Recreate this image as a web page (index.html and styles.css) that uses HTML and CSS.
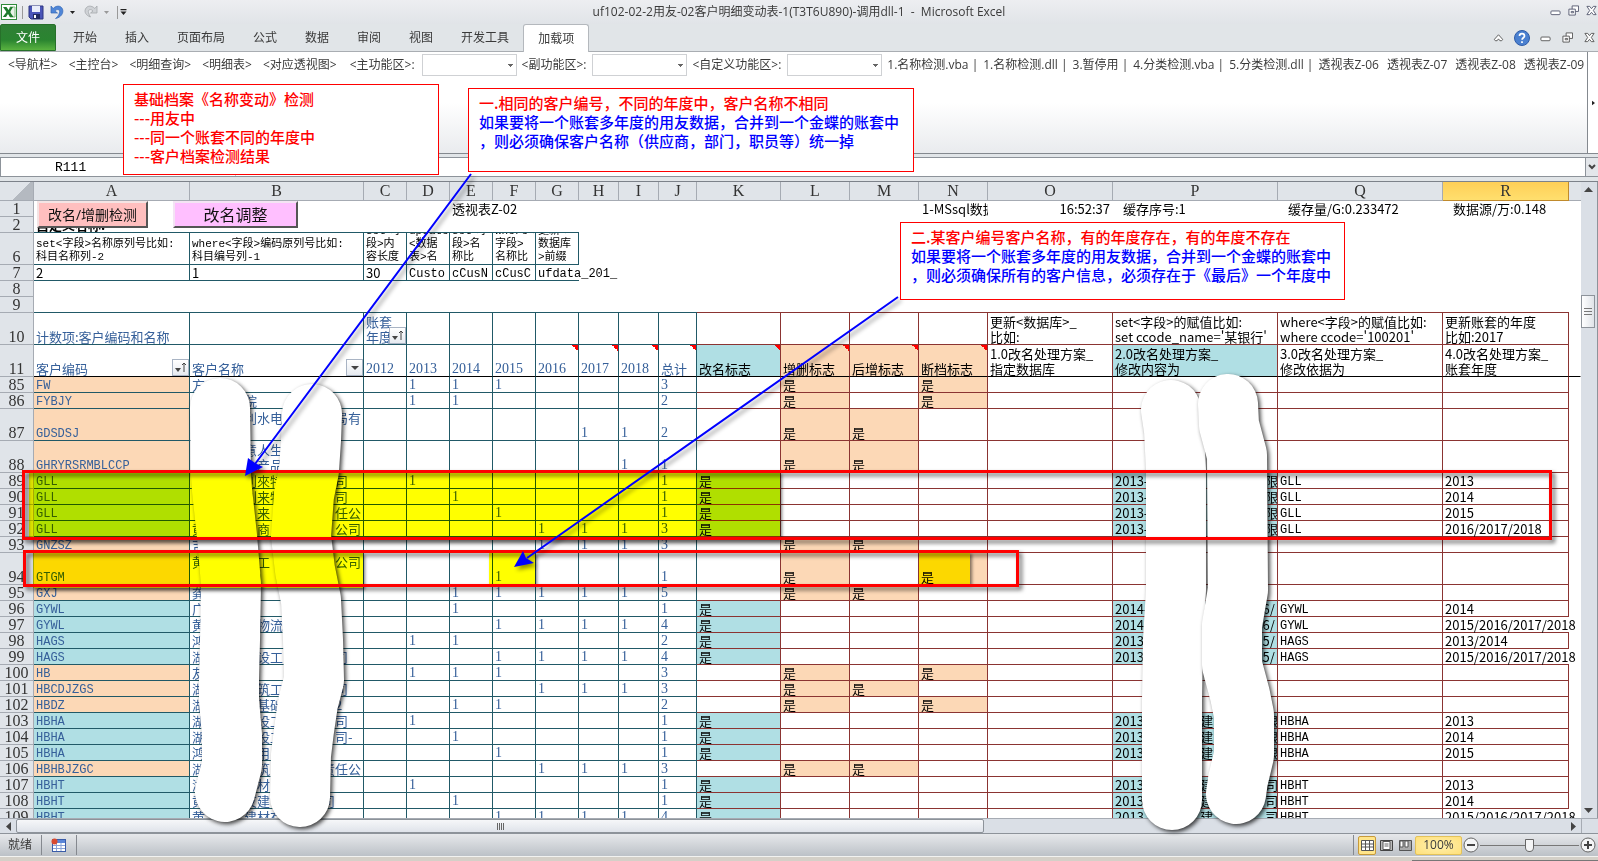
FILE: index.html
```html
<!DOCTYPE html>
<html lang="zh-CN">
<head>
<meta charset="utf-8">
<title>uf102-02-2用友-02客户明细变动表-1(T3T6U890)-调用dll-1 - Microsoft Excel</title>
<link rel="stylesheet" href="styles.css">
</head>
<body>
<header class="titlebar">
  <div class="quick">
    <svg class="ico16" viewBox="0 0 16 16"><rect x=".5" y=".5" width="15" height="15" fill="#fff" stroke="#2f8a3a"/><path d="M9 3h5v10H9z" fill="#e8f3e8" stroke="#7fba7f"/><path d="M2 3h3.500L7.500 6l2-3H12L9 8l3.500 5H9L7 10l-2 3H1.800L5.500 8z" fill="#1e7b2d"/></svg>
    <i class="vsep"></i>
    <svg class="ico16" viewBox="0 0 16 16"><path d="M1 2h14v13H3l-2-2z" fill="#4a55b8" stroke="#2c3580"/><path d="M4 2h8v6H4z" fill="#e9edfa"/><path d="M5 10h7v5H5z" fill="#20285f"/><path d="M6 11h2v3H6z" fill="#fff"/></svg>
    <svg class="ico16" viewBox="0 0 16 16"><path d="M2 2v7h6.500L6 7c2-2.500 5.500-1.500 4.500 1.500C10 11 8.500 13 6.500 14.500c5.500-1 8.500-5.500 7-9.500C12 1.500 7.500 1 4.200 4.500z" fill="#4f86d8" stroke="#3568b5" stroke-width=".7"/></svg>
    <svg class="caret" viewBox="0 0 7 4"><path d="M0 0h7L3.500 4z" fill="#222"/></svg>
    <svg class="ico16" viewBox="0 0 16 16"><path d="M14 2v7H7.500L10 7C8 4.500 4.500 5.500 5.500 8.500c.3 1.500 1 3 2 4.500C3 11.500 1 8 2.500 5 4 1.500 8.500 1 11.800 4.500z" fill="#cfd2d6" stroke="#a5a8ac" stroke-width=".8"/></svg>
    <svg class="caret" viewBox="0 0 7 4"><path d="M0 0h7L3.500 4z" fill="#999"/></svg>
    <i class="vsep"></i>
    <svg class="caret tall" viewBox="0 0 7 7"><path d="M0 0h7v1.500H0zM0 3h7L3.500 7z" fill="#222"/></svg>
  </div>
  <h1>uf102-02-2用友-02客户明细变动表-1(T3T6U890)-调用dll-1 &nbsp;-&nbsp; Microsoft Excel</h1>
  <div class="winbtns">
    <svg viewBox="0 0 12 12"><rect x="1" y="6.500" width="10" height="4" rx="1" fill="#fff" stroke="#555a70"/></svg>
    <svg viewBox="0 0 12 12"><path d="M4.500 1h7v6h-7z" fill="#fff" stroke="#555a70"/><path d="M1 4.500h7V11H1z" fill="#fff" stroke="#555a70"/><path d="M3.500 7h2.500v1.500H3.500z" fill="none" stroke="#555a70"/></svg>
    <svg viewBox="0 0 12 12"><path d="M1 1.500h3L6 4l2-2.500h3L8 6l3 4.500H8L6 8l-2 2.500H1L4 6z" fill="#fff" stroke="#555a70"/></svg>
  </div>
</header>
<nav class="tabs">
  <button class="file">文件</button>
  <button>开始</button><button>插入</button><button>页面布局</button><button>公式</button><button>数据</button><button>审阅</button><button>视图</button><button>开发工具</button><button class="active">加载项</button>
  <div class="tabtools">
    <svg viewBox="0 0 12 12"><path d="M1.500 8L6 3l4.500 5-1 1.500H7.500L6 7.500 4.500 9.500h-2z" fill="#fff" stroke="#555"/></svg>
    <svg class="help" viewBox="0 0 16 16"><circle cx="8" cy="8" r="7.500" fill="#4a80d0" stroke="#2e5ca8"/><path d="M5.500 6c0-3.200 5-3.200 5 0 0 1.800-2.400 1.800-2.400 3.800M8 11.200v1.800" fill="none" stroke="#fff" stroke-width="1.700"/></svg>
    <svg viewBox="0 0 12 12"><rect x="1" y="5.500" width="10" height="4" rx="1" fill="#fff" stroke="#555"/></svg>
    <svg viewBox="0 0 12 12"><path d="M4.500 1h7v6h-7z" fill="#fff" stroke="#555"/><path d="M1 4.500h7V11H1z" fill="#fff" stroke="#555"/><path d="M3.500 7h2.500v1.500H3.500z" fill="none" stroke="#555"/></svg>
    <svg viewBox="0 0 12 12"><path d="M1 1.500h3L6 4l2-2.500h3L8 6l3 4.500H8L6 8l-2 2.500H1L4 6z" fill="#fff" stroke="#555"/></svg>
  </div>
</nav>
<section class="ribbon">
  <div class="addins">
    <div class="group wide">
      <button>&lt;导航栏&gt;</button><button>&lt;主控台&gt;</button><button>&lt;明细查询&gt;</button><button>&lt;明细表&gt;</button><button>&lt;对应透视图&gt;</button>
      <label>&lt;主功能区&gt;:<select><option></option></select></label>
    </div>
    <label>&lt;副功能区&gt;:<select><option></option></select></label>
    <label>&lt;自定义功能区&gt;:<select><option></option></select></label>
    <button>1.名称检测.vba |</button><button>1.名称检测.dll |</button><button>3.暂停用 |</button><button>4.分类检测.vba |</button><button>5.分类检测.dll |</button>
    <div class="group views"><button>透视表Z-06</button><button>透视表Z-07</button><button>透视表Z-08</button><button>透视表Z-09</button></div>
  </div>
  <button class="more" aria-label="更多"><svg viewBox="0 0 4 6"><path d="M0 0l4 3-4 3z" fill="#222"/></svg></button>
</section>
<section class="formula">
  <input class="namebox" aria-label="名称框" value="R111">
  <input class="fx" aria-label="编辑栏">
  <button class="expand" aria-label="展开"><svg viewBox="0 0 8 6"><path d="M1 1l3 3 3-3" fill="none" stroke="#444" stroke-width="2"/></svg></button>
</section>
<main class="sheet">
  <div class="view">
    <table>
      <thead>
        <tr class="cols"><th class="corner"></th><th>A</th><th>B</th><th>C</th><th>D</th><th>E</th><th>F</th><th>G</th><th>H</th><th>I</th><th>J</th><th>K</th><th>L</th><th>M</th><th>N</th><th>O</th><th>P</th><th>Q</th><th class="sel">R</th><th class="rest"></th></tr>
      </thead>
      <tbody class="top">
        <tr><th>1</th><td></td><td></td><td></td><td></td><td>透视表Z-02</td><td></td><td></td><td></td><td></td><td></td><td></td><td></td><td></td><td class="near clip">1-MSsql数据库</td><td class="right">16:52:37</td><td class="indent">缓存序号:1</td><td class="indent">缓存量/G:0.233472</td><td class="indent">数据源/万:0.148</td></tr>
        <tr class="ruled"><th>2</th><td class="bold">自定义名称:</td><td></td><td></td><td></td><td></td><td></td><td></td></tr>
        <tr class="x2 small boxed"><th>6</th><td>set&lt;字段&gt;名称原列号比如:
科目名称列-2</td><td>where&lt;字段&gt;编码原列号比如:
科目编号列-1</td><td class="clip">set&lt;字
段&gt;内
容长度</td><td class="clip">update
&lt;数据
表&gt;名</td><td class="clip">set&lt;字
段&gt;名
称比</td><td class="clip">where&lt;
字段&gt;
名称比</td><td class="clip">更新&lt;
数据库
&gt;前缀</td></tr>
        <tr class="boxed"><th>7</th><td>2</td><td>1</td><td>30</td><td class="mono">Custo</td><td class="mono">cCusN</td><td class="mono">cCusC</td><td class="mono open">ufdata_201_</td></tr>
        <tr><th>8</th></tr>
        <tr class="lined"><th>9</th><td></td><td></td><td></td><td></td><td></td><td></td><td></td><td></td><td></td><td></td><td></td><td></td><td></td><td></td><td></td><td></td><td></td><td></td></tr>
      </tbody>
      <tbody class="pivot">
        <tr class="x2"><th>10</th><td>计数项:客户编码和名称</td><td></td><td>账套
年度<button class="flt" aria-label="排序"><svg viewBox="0 0 15 15"><path d="M2 8h6l-3 4z" fill="#444"/><path d="M11 12V3M9 5l2-2 2 2" fill="none" stroke="#444"/></svg></button></td><td></td><td></td><td></td><td></td><td></td><td></td><td></td><td></td><td></td><td></td><td></td><td>更新&lt;数据库&gt;_
比如:</td><td>set&lt;字段&gt;的赋值比如:
set ccode_name='某银行'</td><td>where&lt;字段&gt;的赋值比如:
where ccode='100201'</td><td>更新账套的年度
比如:2017</td></tr>
        <tr class="x2 frozen"><th>11</th><td>客户编码<button class="flt" aria-label="排序"><svg viewBox="0 0 15 15"><path d="M2 8h6l-3 4z" fill="#444"/><path d="M11 12V3M9 5l2-2 2 2" fill="none" stroke="#444"/></svg></button></td><td>客户名称<button class="flt" aria-label="筛选"><svg viewBox="0 0 15 15"><path d="M4 6h8l-4 4z" fill="#444"/></svg></button></td><td class="num">2012</td><td class="num">2013</td><td class="num">2014</td><td class="num">2015</td><td class="num note">2016</td><td class="num note">2017</td><td class="num note">2018</td><td class="note">总计</td><td class="aqua note">改名标志</td><td class="peach note">增删标志</td><td class="peach note">后增标志</td><td class="peach note">断档标志</td><td>1.0改名处理方案_
指定数据库</td><td class="aqua">2.0改名处理方案_
修改内容为</td><td>3.0改名处理方案_
修改依据为</td><td>4.0改名处理方案_
账套年度</td><td class="rest"></td></tr>
      </tbody>
      <tbody class="pivot" id="rows"></tbody>
    </table>
    <button class="macro pink">改名/增删检测</button>
    <button class="macro violet">改名调整</button>
  </div>
  <div class="vscroll">
    <svg viewBox="0 0 9 5"><path d="M0 5h9L4.500 0z" fill="#444"/></svg>
    <div class="thumb"><i></i><i></i><i></i></div>
    <svg class="end" viewBox="0 0 9 5"><path d="M0 0h9L4.500 5z" fill="#444"/></svg>
  </div>
</main>
<div class="hscroll">
  <span class="arrow"><svg viewBox="0 0 5 9"><path d="M5 0v9L0 4.500z" fill="#444"/></svg></span>
  <div class="track"><div class="thumb"><i></i><i></i><i></i><i></i></div></div>
  <span class="arrow"><svg viewBox="0 0 5 9"><path d="M0 0v9l5-4.500z" fill="#444"/></svg></span>
  <span class="gripbox"></span>
</div>
<footer class="status">
  <span class="ready">就绪</span>
  <span class="macrocell"><svg class="macroicon" viewBox="0 0 16 14"><rect x="1.500" y="1.500" width="13" height="12" fill="#fff" stroke="#3a5ca8"/><path d="M2 2h12v3H2z" fill="#5a86d8"/><path d="M2 7.500h12M2 10.500h12M5.500 5v8M10 5v8" stroke="#8aa4d8"/><circle cx="3.500" cy="3.500" r="3" fill="#d84a30"/></svg></span>
  <div class="zoomtools">
    <button class="vb on" aria-label="普通"><svg viewBox="0 0 13 11"><path d="M.5.5h12v10H.5zM.5 4h12M.5 7h12M4.500.5v10M8.500.5v10" fill="#fff" stroke="#555"/></svg></button>
    <button class="vb" aria-label="页面布局"><svg viewBox="0 0 13 11"><path d="M.5.5h12v10H.5z" fill="#bbb" stroke="#444"/><path d="M3 1.500h7v8H3z" fill="#fff" stroke="#555"/><path d="M4.500 4h4M4.500 6h4" stroke="#666"/></svg></button>
    <button class="vb" aria-label="分页预览"><svg viewBox="0 0 13 11"><path d="M.5.5h12v10H.5z" fill="#aaa" stroke="#555"/><path d="M1 1h3v6H1zM6 1h3v6H6z" fill="#fff" stroke="#555"/></svg></button>
    <button class="pct">100%</button>
    <button class="zb" aria-label="缩小"><svg viewBox="0 0 16 16"><circle cx="8" cy="8" r="7" fill="#f4f5f6" stroke="#666"/><path d="M4 8h8" stroke="#444" stroke-width="2"/></svg></button>
    <input type="range" aria-label="显示比例" min="0" max="100" value="50">
    <button class="zb" aria-label="放大"><svg viewBox="0 0 16 16"><circle cx="8" cy="8" r="7" fill="#f4f5f6" stroke="#666"/><path d="M4 8h8M8 4v8" stroke="#444" stroke-width="2"/></svg></button>
  </div>
</footer>
<div class="desk"><i></i></div>

<svg class="layer brush" aria-hidden="true">
  <path d="M220 408L221 475L222 490L227 536L231 584L230 640L229 680L229 700L232 735L232 765L225 792"/>
  <path d="M312 414L311 440L309 470L304 495L301 536L305 570L311 600L313 640L314 680L308 703L304 730L301 755L300 797"/>
  <path d="M1171 410L1174 430L1176 470L1176 590L1173 640L1172 700L1172 800"/>
  <path d="M1228 404L1229 425L1237 455L1238 590L1232 625L1232 665L1240 695L1244 715L1244 755L1238 780L1236 794"/>
</svg>
<div class="mark m1"></div>
<div class="mark m2"></div>
<div class="mark m3"></div>
<div class="mark m4"></div>
<svg class="layer frames" aria-hidden="true">
  <rect x="23.500" y="471.500" width="1527" height="67"/>
  <rect x="24.500" y="551.500" width="993" height="34"/>
</svg>
<svg class="layer arrows" aria-hidden="true">
  <path class="line" d="M471 174L255 464M898 297L527 558"/>
  <path d="M245 476L248 458L255 463L263 467ZM514 567L523 551L526 558L534 563Z"/>
</svg>
<div class="callout c1">基础档案《名称变动》检测<br>---用友中<br>---同一个账套不同的年度中<br>---客户档案检测结果</div>
<div class="callout c2">一.相同的客户编号，不同的年度中，客户名称不相同<br><b>如果要将一个账套多年度的用友数据，合并到一个金蝶的账套中<br>，则必须确保客户名称（供应商，部门，职员等）统一掉</b></div>
<div class="callout c3">二.某客户编号客户名称，有的年度存在，有的年度不存在<br><b>如果要将一个账套多年度的用友数据，合并到一个金蝶的账套中<br>，则必须确保所有的客户信息，必须存在于《最后》一个年度中</b></div>
<script src="script.js"></script>
</body>
</html>
```
FILE: styles.css
```css
* { box-sizing: border-box; }
body {
  margin: 0;
  height: 100vh;
  position: relative;
  display: flex;
  flex-direction: column;
  overflow: hidden;
  background: #e1e5e8;
  font: 12px/16px "Open Sans", "Noto Sans CJK SC", sans-serif;
  color: #3a3a3a;
}
button, input, select { font: inherit; color: inherit; border: 0; background: none; padding: 0; margin: 0; border-radius: 0; }
svg { display: block; }
i { display: block; }

.titlebar { flex: none; height: 24px; display: flex; align-items: center; background: linear-gradient(#edeef1, #e1e4e8); }
.quick { width: 140px; flex: none; display: flex; align-items: center; gap: 5px; padding-left: 1px; }
.ico16 { width: 16px; height: 16px; }
.vsep { width: 1px; height: 13px; background: #999; }
.caret { width: 5px; height: 3px; margin-right: 3px; }
.caret.tall { height: 6px; width: 7px; margin-left: -3px; }
.titlebar h1 { flex: 1; margin: 0; font: inherit; text-align: center; }
.winbtns { width: 140px; flex: none; display: flex; justify-content: flex-end; gap: 7px; padding: 0 1px 4px 0; }
.winbtns svg, .tabtools svg { width: 11px; height: 11px; }

.tabs { flex: none; height: 28px; display: flex; align-items: stretch; border-bottom: 1px solid #a9adb2; }
.tabs button { padding: 0 14px; }
.tabs .file { width: 56px; margin-right: 3px; color: #fff; background: linear-gradient(#2f7f35, #2a8430 60%, #5ab340); border: 1px solid #27702a; border-radius: 2px 2px 0 0; }
.tabs .active { background: #fff; border: 1px solid #b4b8bd; border-bottom: 0; border-radius: 3px 3px 0 0; margin-bottom: -1px; }
.tabtools { margin-left: auto; display: flex; align-items: center; gap: 11px; padding-right: 3px; }
.tabtools .help { width: 16px; height: 16px; margin: 0 -1px; }

.ribbon { flex: none; height: 102px; display: flex; border-bottom: 1px solid #84898f; background: linear-gradient(#fff 50%, #e9ebee); }
.addins { flex: 1; min-width: 0; overflow: hidden; display: flex; align-items: flex-start; gap: 5px; padding: 2px 0 0 8px; border-right: 1px solid #84898f; white-space: nowrap; }
.addins button, .addins label { height: 22px; flex: none; }
.addins label { display: flex; align-items: center; gap: 6px; }
.group { display: flex; flex: none; gap: 12px; }
.group.wide { gap: 11px; }
.group.wide label { padding-left: 2px; gap: 7px; }
.group.views { gap: 8px; }
.addins select {
  appearance: none; width: 95px; height: 22px; border: 1px solid #cfd1d4;
  background: linear-gradient(#666, #666) 85px 9px / 5px 1px no-repeat, linear-gradient(#666, #666) 86px 10px / 3px 1px no-repeat, linear-gradient(#666, #666) 87px 11px / 1px 1px no-repeat, #fff;
}
.more { width: 10px; flex: none; background: #fff; }
.more svg { width: 3px; height: 6px; margin: 0 auto; }

.formula { flex: none; height: 20px; margin: 3px 0 4px; display: flex; border: solid #8d939a; border-width: 1px 0; background: #fff; }
.formula input { min-width: 0; }
.namebox { width: 235px; flex: none; padding: 0 94px 0 54px; border-left: 1px solid #8d939a; font: 13px "Liberation Mono", monospace; color: #000; }
.fx { flex: 1; border-left: 1px solid #ccd0d5; }
.expand { width: 13px; flex: none; border-left: 1px solid #8d939a; background: #e3e6ea; }
.expand svg { width: 8px; height: 6px; margin: 0 auto; }

.sheet { flex: 1; min-height: 0; display: flex; border-top: 1px solid #7d828a; background: #fff; }
.view { flex: 1; min-width: 0; overflow: hidden; position: relative; }
table, thead, tbody { display: block; }
tr {
  display: grid; height: 16px;
  grid-template-rows: minmax(0, 1fr);
  grid-template-columns: 34px 156px 174px repeat(5, 43px) 40px 40px 38px 84px 69px 69px 69px 125px 165px 165px 126px 1fr;
}
tr.x2 { height: 32px; }
tr.cols { height: 19px; }
th {
  display: flex; align-items: flex-end; justify-content: center; min-height: 0; padding: 0;
  font: 16px/15px "Liberation Serif", serif; color: #333;
  background: #e0e4e9; border: solid #a6abb3; border-width: 0 1px 1px 0;
}
.cols th { align-items: center; line-height: 18px; }
.cols .corner { background: linear-gradient(135deg, #e0e4e9 60%, #b4b9c0 60%); }
.cols .sel { background: linear-gradient(#ffcf57, #ffdf6e); border-color: #c08a2c; }
.cols .rest { border-right: 0; }
td {
  display: flex; align-items: flex-end; position: relative; min-width: 0; min-height: 0;
  padding: 0 0 0 2px; white-space: pre; color: #000;
  font: 13px/16px "Noto Sans CJK SC", sans-serif;
}
td.clip { overflow: hidden; }
td.num { font: 14px/15px "Liberation Serif", serif; }
td.right { justify-content: flex-end; padding-right: 3px; }
td.indent { padding-left: 10px; }
td.near { padding-left: 3px; }
td.bold { font-weight: 700; line-height: 15px; }
.ruled td, .boxed td { border-bottom: 1px solid #215967; }
.boxed td { border-right: 1px solid #215967; line-height: 15px; }
.boxed td.open { border-right: 0; }
tr.small td { font: 11px/13px "Liberation Mono", "Noto Sans CJK SC", monospace; }
.lined td { border-bottom: 1px solid #215967; }
.lined td:nth-child(n+12) { border-color: #8b3432; }
.pivot td { border: solid #215967; border-width: 0 1px 1px 0; color: #36609a; line-height: 15px; }
.pivot td:nth-child(n+12) { border-color: #8b3432; color: #000; }
.pivot td.rest { border-color: transparent; }
.pivot td.spill { border-right: 0; }
.pivot tr.frozen td { border-bottom-color: #000; }
tbody td.mono { font: 12px/12px "Liberation Mono", monospace; }
.aqua { background: #b0dfe4; }
.peach { background: #fcd8b6; }
.note { background-image: linear-gradient(to top right, transparent 50%, #f00 50%); background-size: 6px 6px; background-position: right top; background-repeat: no-repeat; }
.flt { position: absolute; right: 0; bottom: 0; width: 17px; height: 17px; border: 1px solid #a9b4c4; background: linear-gradient(#fff, #e6eaf0); }
.macro { position: absolute; top: 19px; height: 27px; color: #111; border: 2px solid; }
.pink { left: 37px; width: 111px; font-size: 14px; background: #ffbfbf; border-color: #f4e4e4 #555 #555 #f4e4e4; }
.violet { left: 173px; width: 125px; font-size: 16px; background: #ffbfff; border-color: #f4e4f4 #555 #555 #f4e4f4; }

.vscroll { width: 17px; flex: none; display: flex; flex-direction: column; align-items: center; background: #dadfe6; border-right: 1px solid #8d939a; padding: 5px 2px 5px 0; }
.vscroll svg { width: 9px; height: 5px; }
.vscroll .thumb { width: 14px; height: 33px; margin-top: 103px; display: flex; flex-direction: column; justify-content: center; align-items: center; gap: 2px; border: 1px solid #8d939a; background: linear-gradient(90deg, #fff, #dfe3e8); }
.vscroll .thumb i { width: 8px; height: 1px; background: #777; }
.vscroll .end { margin-top: auto; }

.hscroll { flex: none; height: 15px; display: flex; background: #dadfe6; border-top: 1px solid #a6abb3; }
.arrow { width: 16px; display: flex; align-items: center; justify-content: center; }
.arrow svg { width: 5px; height: 9px; }
.track { flex: 1; }
.hscroll .thumb { width: 62.5%; height: 14px; display: flex; justify-content: center; align-items: center; gap: 1px; background: linear-gradient(#f6f7f9, #dfe3ea); border: 1px solid #8d939a; border-radius: 2px; }
.hscroll .thumb i { width: 1px; height: 7px; background: #666; }
.gripbox { width: 17px; border-left: 1px solid #a6abb3; }

.status { flex: none; height: 24px; display: flex; align-items: center; border-top: 1px solid #8d939a; border-bottom: 1px solid #f2f2f0; background: linear-gradient(#e6e8eb, #bcc1c7); }
.ready { width: 42px; padding-left: 8px; border-right: 1px solid #85898f; line-height: 20px; }
.macrocell { height: 20px; padding: 3px 9px; border-right: 1px solid #85898f; }
.macroicon { width: 16px; height: 14px; }
.zoomtools { height: 20px; margin-left: auto; display: flex; align-items: center; border-left: 1px solid #85898f; padding: 0 2px 0 4px; gap: 1px; }
.vb { width: 18px; height: 19px; border: 1px solid transparent; border-radius: 2px; }
.vb svg { width: 13px; height: 11px; margin: 0 auto; }
.vb.on { border-color: #c79a3a; background: #ffe58a; }
.pct { width: 47px; height: 19px; border: 1px solid #e3c25a; border-radius: 2px; background: radial-gradient(#fff0b0, #ffe07a); }
.zb svg { width: 16px; height: 16px; }
.status input { appearance: none; width: 99px; height: 14px; background: linear-gradient(#777, #777) center / 100% 1px no-repeat; }
.status input::-webkit-slider-thumb { appearance: none; width: 9px; height: 13px; border: 1px solid #666; border-radius: 1px 1px 5px 5px; background: #f4f5f6; }
.desk { flex: none; height: 4px; background: #d4d0c8; display: flex; justify-content: flex-end; align-items: flex-end; }
.desk i { width: 186px; height: 1px; background: #777; }

.layer { position: absolute; left: 0; top: 0; width: 100%; height: 100%; pointer-events: none; }
.brush path { fill: none; stroke: #fff; stroke-width: 60px; stroke-linecap: round; stroke-linejoin: round; filter: drop-shadow(2px 2px 2px rgb(0 0 0 / .75)); }
.mark { position: absolute; background: #ff0; mix-blend-mode: multiply; box-shadow: 2px 2px 3px rgb(0 0 0 / .5); }
.m1 { left: 29px; top: 472px; width: 751px; height: 68px; }
.m2 { left: 33px; top: 553px; width: 330px; height: 35px; }
.m3 { left: 489px; top: 553px; width: 46px; height: 31px; }
.m4 { left: 919px; top: 552px; width: 51px; height: 32px; }
.frames rect { fill: none; stroke: #f00; stroke-width: 3px; filter: drop-shadow(3px 3px 2px rgb(0 0 0 / .6)); }
.arrows { filter: drop-shadow(3px 3px 2px rgb(0 0 0 / .45)); }
.arrows path { fill: #00f; }
.arrows .line { fill: none; stroke: #00f; stroke-width: 2px; }
.callout { position: absolute; background: #fff; border: 1px solid #f00; color: #f00; font: 500 15px/19px "Noto Sans CJK SC", sans-serif; white-space: nowrap; padding: 4px 10px; }
.callout b { font-weight: inherit; color: #00f; }
.c1 { left: 123px; top: 84px; width: 316px; height: 91px; }
.c2 { left: 468px; top: 88px; width: 446px; height: 84px; }
.c3 { left: 900px; top: 222px; width: 445px; height: 78px; }
```
FILE: script.js
```js
// number, code, name, years present, flagged columns, new content, year list
const records = [
  [85, "FW", "方", "DEF", "LN"],
  [86, "FYBJY", "　　　　院", "DE", "LN"],
  [87, "GDSDSJ", "　　　　利水电　　　　局有\n ", "HI", "LM"],
  [88, "GHRYRSRMBLCCP", "　　　　意人生　　　　）\n　　　　　产品", "I", "LM"],
  [89, "GLL", "　　　　利來特　　　　司", "D", "K", "2013-　　　　　　　　　限", "2013"],
  [90, "GLL", "　　　　利来特　　　　司", "E", "K", "2013-　　　　　　　　　限", "2014"],
  [91, "GLL", "　　　　　来　　　　　任公", "F", "K", "2013-　　　　　　　　　限", "2015"],
  [92, "GLL", "黄　　　　商　　　　　公司", "GHI", "K", "2013-　　　　　　　　　限", "2016/2017/2018"],
  [93, "GNZSZ", "吉", "GHI", "LM"],
  [94, "GTGM", "黄　　　　工　　　　　公司\n（　　　　）", "F", "LN"],
  [95, "GXJ", "龚", "EFGHI", "LM"],
  [96, "GYWL", "广", "E", "K", "2014-　　　　　　　　 16/", "2014"],
  [97, "GYWL", "黄　　　　物流", "FGHI", "K", "2014-　　　　　　　　 16/", "2015/2016/2017/2018"],
  [98, "HAGS", "鸿", "DE", "K", "2013-　　　　　　　　 15/", "2013/2014"],
  [99, "HAGS", "湖　　　　设工　　　　司", "FGHI", "K", "2013-　　　　　　　　 15/", "2015/2016/2017/2018"],
  [100, "HB", "友", "DEF", "LN"],
  [101, "HBCDJZGS", "湖　　　　筑工　　　　司", "GHI", "LM"],
  [102, "HBDZ", "湖　　　　基础　　　　2", "EF", "LN"],
  [103, "HBHA", "湖　　　　设工　　　　司", "D", "K", "2013-　　　　建　　　　限", "2013"],
  [104, "HBHA", "湖　　　　设工　　　　司-", "E", "K", "2013-　　　　建　　　　限", "2014"],
  [105, "HBHA", "鸿　　　　用", "F", "K", "2013-　　　　建　　　　限", "2015"],
  [106, "HBHBJZGC", "湖　　　　筑　　　　责任公", "GHI", "LM"],
  [107, "HBHT", "湖　　　　材", "D", "K", "2013-　　　　建　　　　司", "2013"],
  [108, "HBHT", "黄　　　友建　　　　司", "E", "K", "2013-　　　　建　　　　司", "2014"],
  [109, "HBHT", "黄　　　建材有", "FGHI", "K", "2013-　　　　建　　　　司", "2015/2016/2017/2018"],
];

const cell = (text = "", cls = "") => `<td class="${cls}">${text}</td>`;

document.getElementById("rows").innerHTML = records.map(([n, code, name, years, flags, content = "", list = ""]) => {
  const renamed = flags === "K";
  const tall = name.includes("\n") ? "x2" : "";
  return `<tr class="${tall}"><th>${n}</th>` +
    cell(code, renamed ? "mono aqua" : "mono peach") +
    cell(name) +
    [..."CDEFGHI"].map(c => cell(years.includes(c) ? "1" : "", "num")).join("") +
    cell(years.length, "num") +
    [..."KLMN"].map(c => flags.includes(c) ? cell("是", c === "K" ? "aqua" : "peach") : cell()).join("") +
    cell() +
    cell(content, renamed ? "aqua clip" : "") +
    cell(renamed ? code : "", "mono") +
    cell(list, list.length > 14 ? "spill" : "") +
    "</tr>";
}).join("");
```
